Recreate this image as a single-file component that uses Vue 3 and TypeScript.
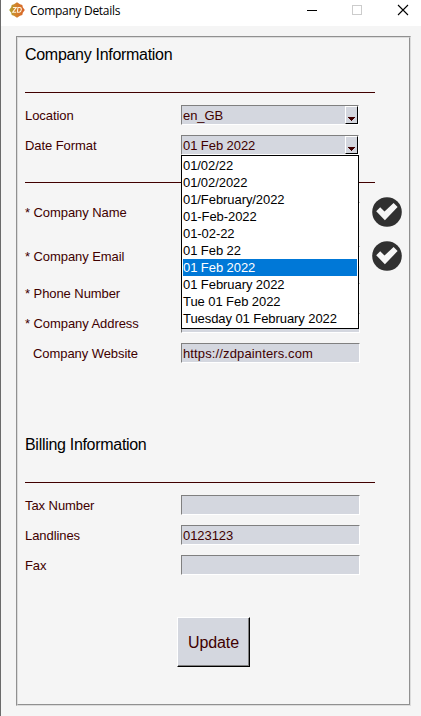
<script setup lang="ts">
import { ref } from 'vue'

interface Field {
  label: string
  value: string
  tall?: boolean
  optional?: boolean
}

const formats: string[] = [
  '01/02/22',
  '01/02/2022',
  '01/February/2022',
  '01-Feb-2022',
  '01-02-22',
  '01 Feb 22',
  '01 Feb 2022',
  '01 February 2022',
  'Tue 01 Feb 2022',
  'Tuesday 01 February 2022',
]
const location = ref('en_GB')
const dateFormat = ref('01 Feb 2022')

const companyFields: Field[] = [
  { label: '* Company Name', value: '', tall: true },
  { label: '* Company Email', value: '', tall: true },
  { label: '* Phone Number', value: '' },
  { label: '* Company Address', value: '' },
  { label: 'Company Website', value: 'https://zdpainters.com', optional: true },
]
const billingFields: Field[] = [
  { label: 'Tax Number', value: '' },
  { label: 'Landlines', value: '0123123' },
  { label: 'Fax', value: '' },
]
</script>

<template>
  <div class="window">
    <header class="titlebar">
      <svg class="logo" width="16" height="16" viewBox="0 0 16 16">
        <defs>
          <linearGradient id="logoFill" x1="0" y1="0" x2="1" y2="0">
            <stop offset="0" stop-color="#a9a32c" />
            <stop offset="0.4" stop-color="#d3852c" />
            <stop offset="1" stop-color="#d9622a" />
          </linearGradient>
        </defs>
        <path d="M8 0.3 L11 2.3 L13.3 3 L13.8 5.3 L15.8 8 L13.8 10.7 L13.3 13 L11 13.7 L8 15.7 L5 13.7 L2.7 13 L2.2 10.7 L0.2 8 L2.2 5.3 L2.7 3 L5 2.3 Z" fill="url(#logoFill)" />
        <path d="M3.9 5.5H7.2L3.7 10.2H7M9 5.5L8.3 10.2H10.2Q12 10 12.3 7.8Q12.5 5.5 10.8 5.5Z" fill="none" stroke="#fff3dc" stroke-width="1.1" />
      </svg>
      <span class="title">Company Details</span>
      <svg class="controls" width="104" height="20" viewBox="0 0 104 20" shape-rendering="crispEdges">
        <path d="M0 10.5H10" stroke="#000" />
        <rect x="45.5" y="5.5" width="9" height="9" fill="none" stroke="#ccc" />
        <path d="M91 5L101 15M101 5L91 15" stroke="#000" stroke-width="1.1" shape-rendering="auto" />
      </svg>
    </header>

    <main class="frame">
      <div class="panel">
        <h2>Company Information</h2>
        <hr />
        <div class="row">
          <label>Location</label>
          <div class="input combo">
            <span>{{ location }}</span>
            <button class="arrow"><svg width="7" height="4" viewBox="0 0 7 4" shape-rendering="crispEdges"><path d="M0 0H7V1H6V2H5V3H4V4H3V3H2V2H1V1H0Z" fill="#400000" /></svg></button>
          </div>
        </div>
        <div class="row">
          <label>Date Format</label>
          <div class="input combo">
            <span>{{ dateFormat }}</span>
            <button class="arrow"><svg width="7" height="4" viewBox="0 0 7 4" shape-rendering="crispEdges"><path d="M0 0H7V1H6V2H5V3H4V4H3V3H2V2H1V1H0Z" fill="#400000" /></svg></button>
            <ul class="menu">
              <li v-for="f in formats" :key="f" :class="{ selected: f === dateFormat }" @click="dateFormat = f">{{ f }}</li>
            </ul>
          </div>
        </div>
        <hr />
        <div v-for="f in companyFields" :key="f.label" class="row" :class="{ tall: f.tall }">
          <label :class="{ optional: f.optional }">{{ f.label }}</label>
          <div class="input" :class="{ url: f.optional }">{{ f.value }}</div>
          <svg v-if="f.tall" class="check" width="30" height="30" viewBox="0 0 30 30">
            <circle cx="15" cy="15" r="14.8" fill="#303030" />
            <path d="M4.2 14.3L8.2 10.3L12.5 14.4L21.6 6L25.6 10.1L12.9 23.3Z" fill="#f6f6f6" />
          </svg>
        </div>

        <h2 class="billing">Billing Information</h2>
        <hr />
        <div v-for="f in billingFields" :key="f.label" class="row">
          <label>{{ f.label }}</label>
          <div class="input">{{ f.value }}</div>
        </div>
        <button class="update">Update</button>
      </div>
    </main>
  </div>
</template>

<style>
body {
  margin: 0;
  background: #f5f5f5;
}
</style>

<style scoped>
* {
  box-sizing: border-box;
}
.window {
  height: 716px;
  border-left: 1px solid #6b6b6b;
  background: #f5f5f5;
  font: 13px 'Liberation Sans', Arial, sans-serif;
  letter-spacing: -0.07px;
  color: #400000;
  display: flex;
  flex-direction: column;
}
.titlebar {
  height: 26px;
  background: #fff;
  display: flex;
  align-items: flex-start;
  padding-left: 8px;
}
.logo {
  margin-top: 2px;
}
.title {
  margin-left: 5px;
  width: 100px;
  font: 12px/22px 'Open Sans', 'Noto Sans', sans-serif;
  letter-spacing: -0.3px;
  color: #000;
  white-space: nowrap;
}
.controls {
  margin-left: 177px;
}
.frame {
  margin: 10px 10px 10px 15px;
  flex: 1;
  border: 1px solid #909090;
  border-right-color: #dcdcdc;
  border-bottom-color: #dcdcdc;
}
.panel {
  height: 100%;
  border: 1px solid #dcdcdc;
  border-right-color: #909090;
  border-bottom-color: #909090;
  padding-left: 7px;
}
h2 {
  height: 32px;
  margin: 0;
  font-size: 16px;
  font-weight: 400;
  line-height: 34px;
  letter-spacing: -0.3px;
  color: #000;
}
h2.billing {
  margin-top: 60px;
}
hr {
  width: 350px;
  height: 1px;
  margin: 22px 0 7px;
  border: 0;
  background: #400000;
}
.row {
  height: 30px;
  display: grid;
  grid-template-columns: 156px 191px 30px;
  align-items: center;
}
.row.tall {
  height: 44px;
}
label {
  white-space: pre;
}
label.optional {
  padding-left: 8px;
}
.input {
  position: relative;
  width: 179px;
  height: 20px;
  border: 1px solid #808080;
  border-right-color: #fff;
  border-bottom-color: #fff;
  background: #d4d7df;
  padding-left: 1px;
  line-height: 19px;
}
.input.url {
  letter-spacing: 0.13px;
}
.combo {
  width: 178px;
  display: flex;
  justify-content: space-between;
}
.arrow {
  width: 13px;
  height: 18px;
  padding: 8px 0 0;
  display: flex;
  align-items: center;
  justify-content: center;
  background: #d4d7df;
  border: 1px solid #fff;
  border-right-color: #000;
  border-bottom-color: #000;
}
.menu {
  position: absolute;
  z-index: 2;
  top: 19px;
  left: -1px;
  width: 178px;
  margin: 0;
  padding: 1px;
  list-style: none;
  background: #fff;
  border: 1px solid #000;
  color: #000;
}
.menu li {
  height: 17px;
  line-height: 17px;
  white-space: nowrap;
}
.menu li.selected {
  background: #0078d7;
  color: #fff;
}
.update {
  display: block;
  width: 73px;
  height: 50px;
  margin: 37px 0 0 152px;
  padding: 2px 0 0;
  font: 16px 'Liberation Sans', Arial, sans-serif;
  letter-spacing: -0.1px;
  color: #400000;
  background: #d4d7df;
  border: 1px solid #fff;
  border-right-color: #000;
  border-bottom-color: #000;
  box-shadow: inset -1px -1px #808080;
}
</style>
